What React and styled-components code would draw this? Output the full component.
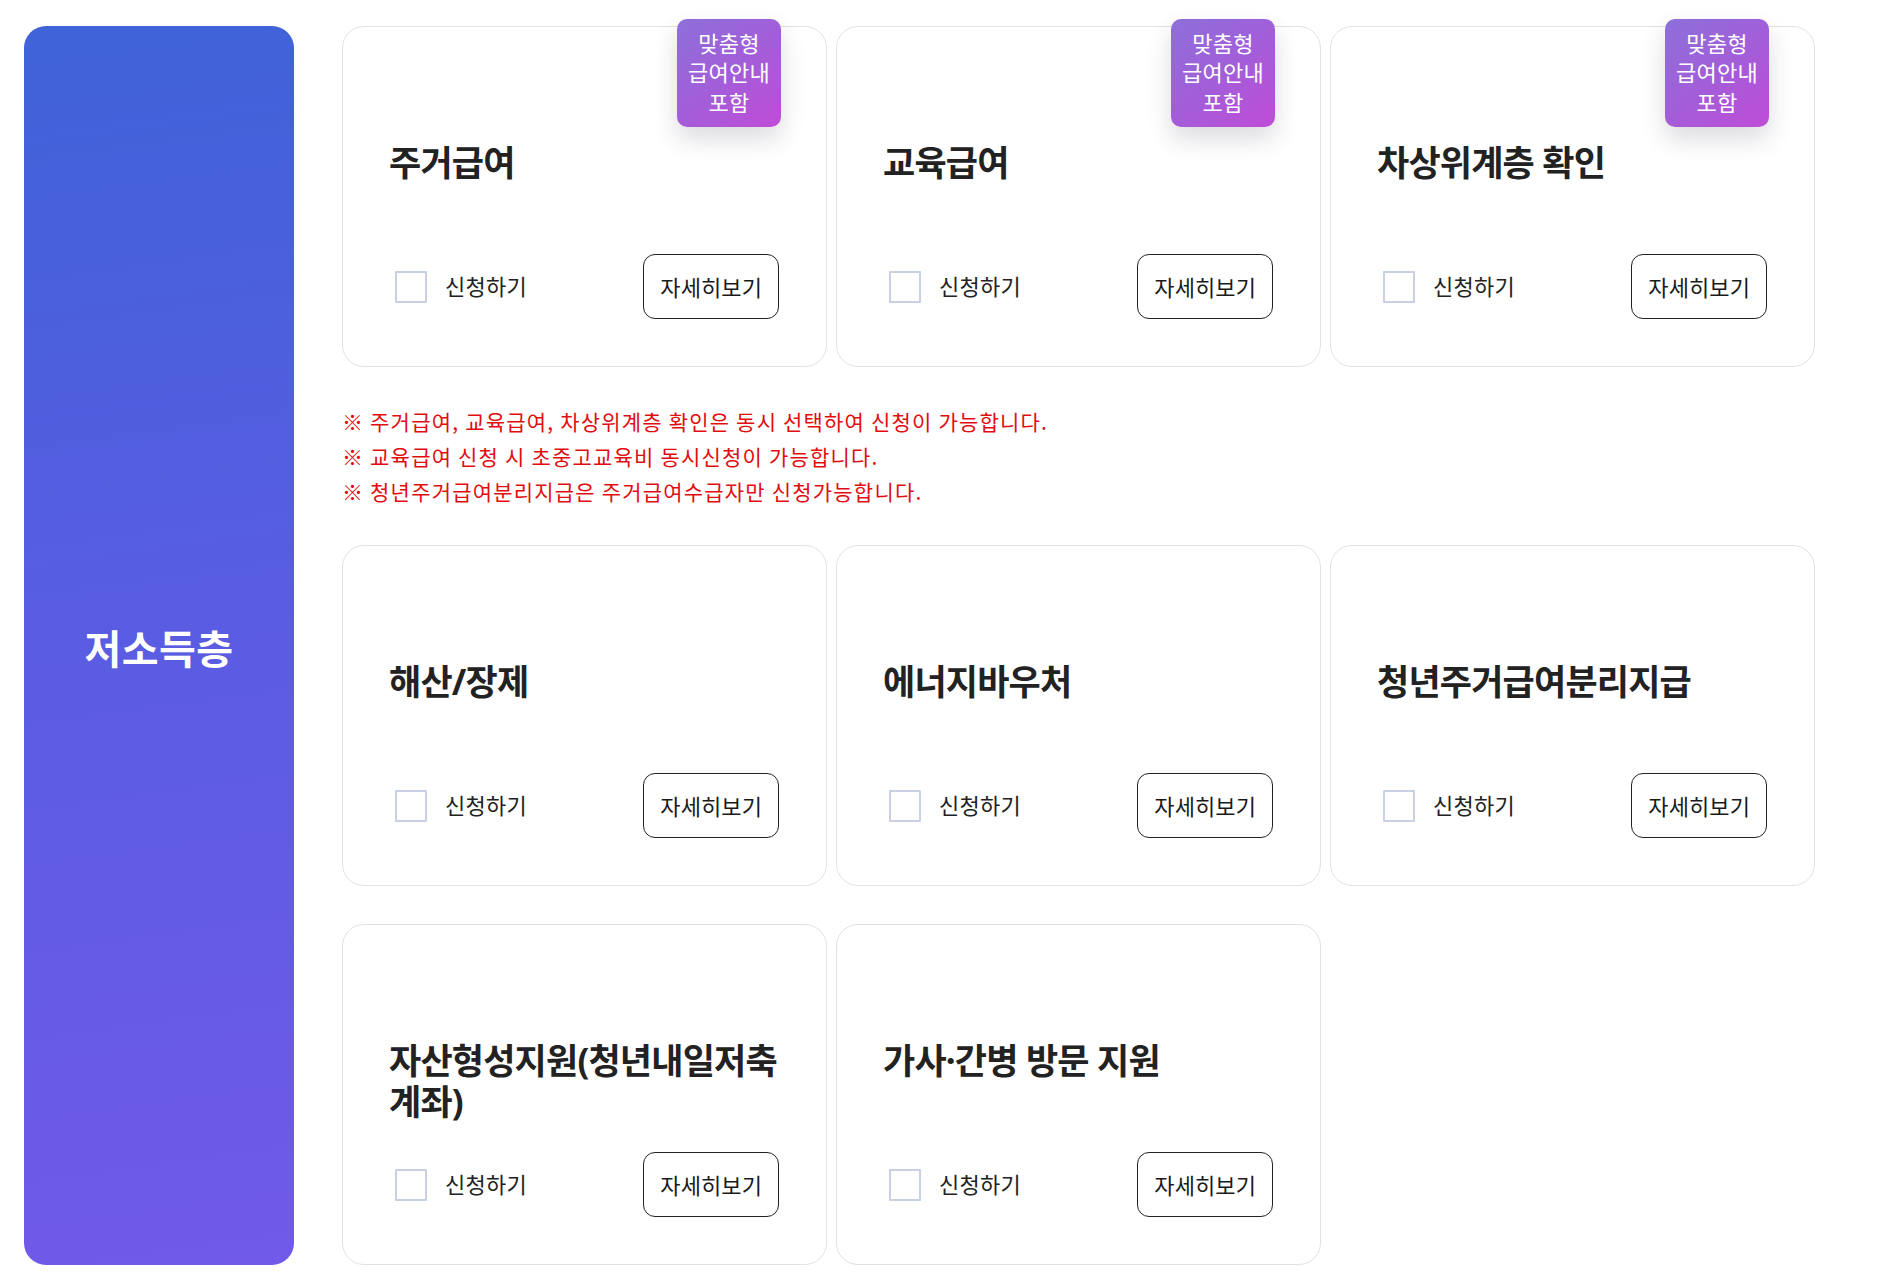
import React from "react";
import styled, { createGlobalStyle } from "styled-components";

const GlobalStyle = createGlobalStyle`
  html, body {
    margin: 0;
    padding: 0;
    background: #ffffff;
  }
  body {
    font-family: "Noto Sans CJK KR", "Noto Sans", sans-serif;
    color: #222;
  }
  * { box-sizing: border-box; }
`;

const Page = styled.div`
  display: flex;
  align-items: stretch;
  gap: 48px;
  padding: 26px 0 16px 24px;
  width: 1891px;
`;

const Side = styled.aside`
  width: 270px;
  flex: 0 0 270px;
  border-radius: 22px;
  background: linear-gradient(172deg, #3f63d9 0%, #5a5ce2 50%, #715ae9 100%);
  display: flex;
  align-items: center;
  justify-content: center;
`;

const SideTitle = styled.h2`
  margin: 2px 0 0;
  color: #fff;
  font-size: 40px;
  font-weight: 700;
  letter-spacing: 0.4px;
  line-height: 1.2;
`;

const Content = styled.div`
  width: 1473px;
  display: flex;
  flex-direction: column;
`;

const Grid = styled.div`
  display: grid;
  grid-template-columns: repeat(3, 485px);
  column-gap: 9px;
  row-gap: 38px;
`;

const Card = styled.div`
  position: relative;
  height: 341px;
  border: 1px solid #e2e2e4;
  border-radius: 22px;
  background: #fff;
  padding: 115px 47px 47px 46px;
  display: flex;
  flex-direction: column;
`;

const Badge = styled.div`
  position: absolute;
  top: -8px;
  right: 45px;
  width: 104px;
  height: 108px;
  border-radius: 10px;
  background: linear-gradient(140deg, #8d70da 0%, #a25ed9 50%, #c04cd7 100%);
  box-shadow: 0 12px 24px rgba(40, 40, 60, 0.16);
  color: #fff;
  font-size: 22px;
  letter-spacing: 0.3px;
  line-height: 29.5px;
  text-align: center;
  display: flex;
  align-items: center;
  justify-content: center;
  padding-bottom: 2px;
`;

const Title = styled.h3`
  margin: 0;
  font-family: "Noto Sans", "Noto Sans CJK KR", sans-serif;
  font-size: 35px;
  font-weight: 700;
  letter-spacing: -0.8px;
  line-height: 41px;
  color: #222;
`;

const Bottom = styled.div`
  margin-top: auto;
  display: flex;
  align-items: center;
  justify-content: space-between;
`;

const Apply = styled.label`
  display: flex;
  align-items: center;
  gap: 18px;
  margin-left: 6px;
  font-size: 22px;
  letter-spacing: 0.3px;
  color: #222;
  cursor: pointer;
`;

const Check = styled.input`
  appearance: none;
  margin: 0;
  width: 32px;
  height: 32px;
  border: 2px solid #c9d0e4;
  border-radius: 1px;
  background: #fff;
`;

const ApplyText = styled.span`
  margin-bottom: 3px;
`;

const DetailButton = styled.button`
  height: 65px;
  padding: 0 16px 2px;
  border: 1px solid #222;
  border-radius: 12px;
  background: #fff;
  font-family: inherit;
  font-size: 22px;
  letter-spacing: 0.1px;
  color: #1a1a1a;
  cursor: pointer;
`;

const Notes = styled.ul`
  list-style: none;
  margin: 37px 0 36px;
  padding: 0;
  color: #e10d10;
  font-size: 21px;
  line-height: 35px;
  letter-spacing: 1.2px;
`;

const Note = styled.li`
  margin: 0;
`;

const topCards = [
  { title: "주거급여", badge: true },
  { title: "교육급여", badge: true },
  { title: "차상위계층 확인", badge: true },
];

const otherCards = [
  { title: "해산/장제" },
  { title: "에너지바우처" },
  { title: "청년주거급여분리지급" },
  { title: "자산형성지원(청년내일저축계좌)" },
  { title: "가사·간병 방문 지원" },
];

const notes = [
  "※ 주거급여, 교육급여, 차상위계층 확인은 동시 선택하여 신청이 가능합니다.",
  "※ 교육급여 신청 시 초중고교육비 동시신청이 가능합니다.",
  "※ 청년주거급여분리지급은 주거급여수급자만 신청가능합니다.",
];

function BenefitCard({ title, badge }) {
  return (
    <Card>
      {badge && (
        <Badge>
          맞춤형
          <br />
          급여안내
          <br />
          포함
        </Badge>
      )}
      <Title>{title}</Title>
      <Bottom>
        <Apply>
          <Check type="checkbox" />
          <ApplyText>신청하기</ApplyText>
        </Apply>
        <DetailButton type="button">자세히보기</DetailButton>
      </Bottom>
    </Card>
  );
}

export default function App() {
  return (
    <>
      <GlobalStyle />
      <Page>
        <Side>
          <SideTitle>저소득층</SideTitle>
        </Side>
        <Content>
          <Grid>
            {topCards.map((c) => (
              <BenefitCard key={c.title} {...c} />
            ))}
          </Grid>
          <Notes>
            {notes.map((n) => (
              <Note key={n}>{n}</Note>
            ))}
          </Notes>
          <Grid>
            {otherCards.map((c) => (
              <BenefitCard key={c.title} {...c} />
            ))}
          </Grid>
        </Content>
      </Page>
    </>
  );
}
